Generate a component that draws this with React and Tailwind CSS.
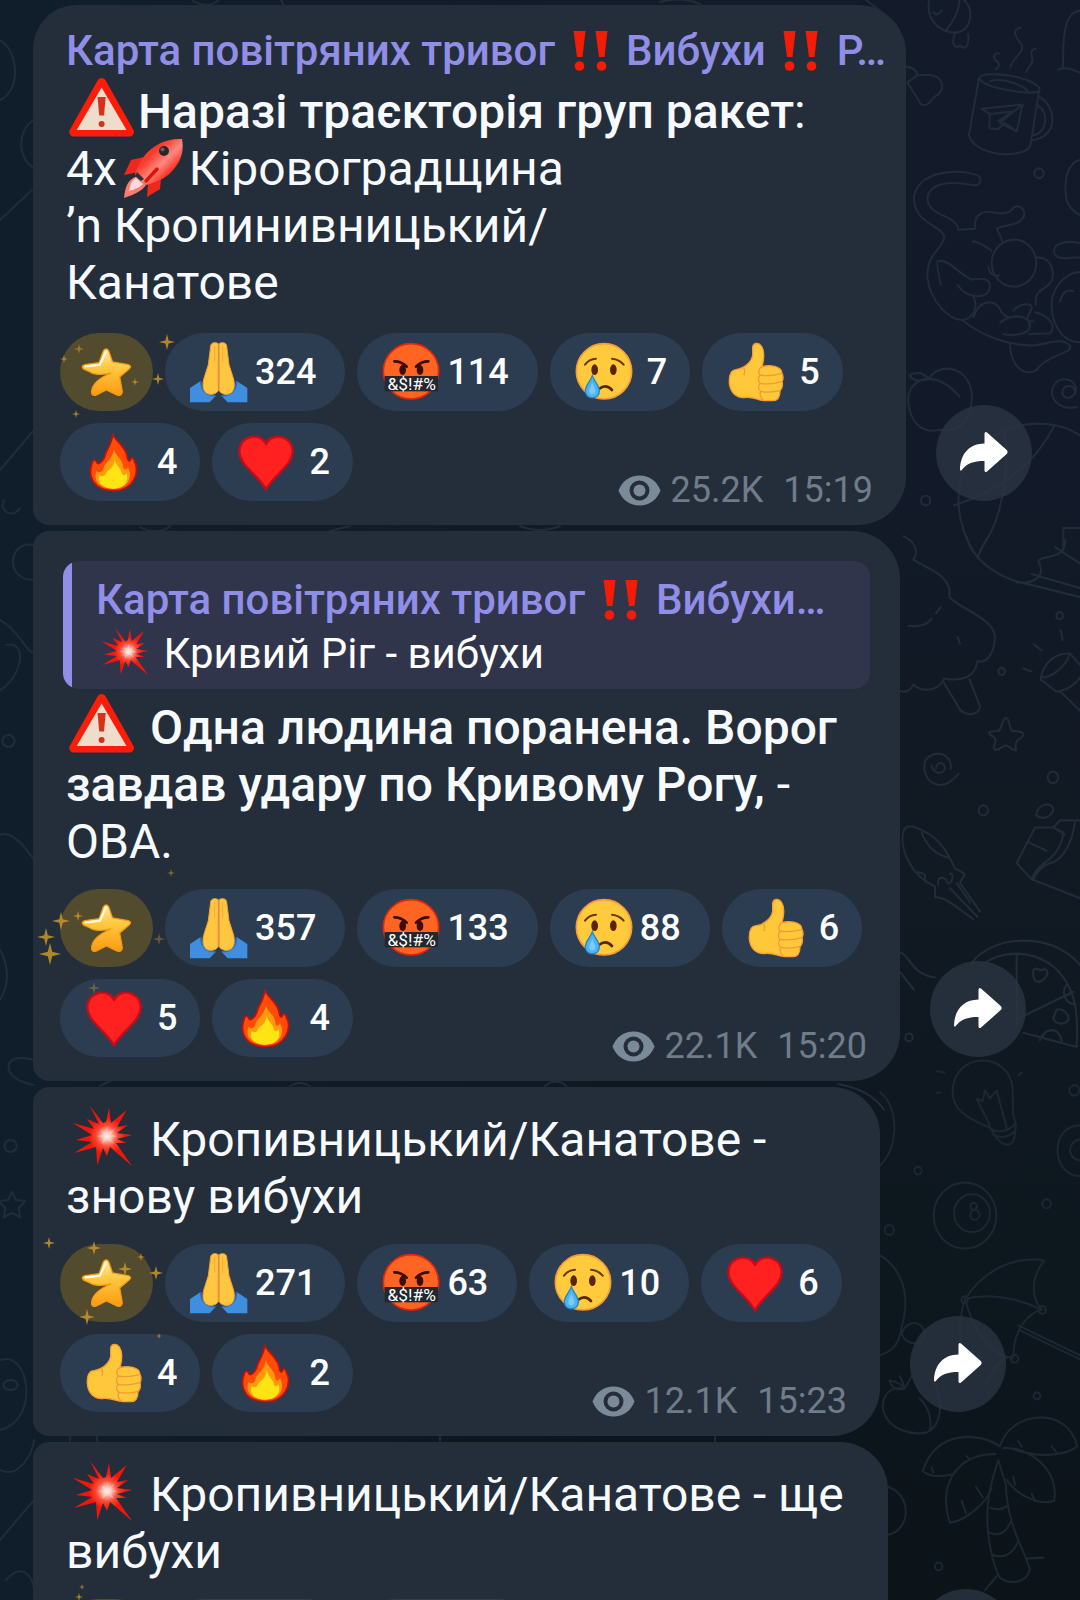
import clsx from 'clsx';

const channelTitle = 'Карта повітряних тривог';

/* Emoji that sit inside the message text */

const WarningEmoji = () => (
  <svg viewBox="0 0 72 80" role="img" aria-label="⚠️" className="-my-4 inline-block h-20 w-[72px] overflow-visible align-middle">
    <path d="M35.600 7.500 L63.500 57 H7.800 Z" fill="#fb1d08" stroke="#fb1d08" strokeWidth="9" strokeLinejoin="round" />
    <path d="M35.600 12.500 L60.500 55 H10.700 Z" fill="#efdccb" />
    <path d="M31.500 22 H39.700 L38 40.500 H33.200 Z" fill="#d8301a" />
    <circle cx="35.600" cy="49" r="3" fill="#c8371f" />
  </svg>
);

const RocketEmoji = () => (
  <svg viewBox="0 0 72 80" role="img" aria-label="🚀" className="-my-4 inline-block h-20 w-[72px] overflow-visible align-middle">
    <defs>
      <linearGradient id="rocket-body" x1="0" y1="0" x2="1" y2="1">
        <stop offset="0" stopColor="#f8281a" />
        <stop offset="0.350" stopColor="#fb3c2e" />
        <stop offset="0.550" stopColor="#ff8a80" />
        <stop offset="0.750" stopColor="#f8281a" />
        <stop offset="1" stopColor="#e81708" />
      </linearGradient>
    </defs>
    <path d="M27 25 L14 28 L7 43 L22 40 Z" fill="#f0281c" />
    <path d="M44 46 L43 57 L30 65 L31 52 Z" fill="#f0281c" />
    <path d="M20 44 C10 48 8 56 7 66 C18 62 25 59 29 53 Z" fill="#ff7b72" />
    <path d="M19 46 C13 50 14 52 12 59 C18 57 22 56 26 52 Z" fill="#ffdcd8" />
    <path d="M65 7 C50 6 36 13 28 23 C23 30 19 37 18 43 L29 53 C41 50 51 45 57 37 C65 27 67 18 65 7 Z" fill="url(#rocket-body)" />
    <path d="M20 40 L27 47 L24 49 L18 44 Z" fill="#2c3038" />
    <path d="M40 37 L29 49" stroke="#e01206" strokeWidth="3.500" strokeLinecap="round" />
    <circle cx="47" cy="19" r="5" fill="#26272c" />
    <circle cx="45.500" cy="17.500" r="2" fill="#62636a" />
  </svg>
);

const BoomEmoji = ({ small }) => (
  <svg
    viewBox="0 0 72 80"
    role="img"
    aria-label="💥"
    className={clsx('inline-block overflow-visible align-middle', small ? '-my-3 h-16 w-[57px]' : '-my-4 h-20 w-[72px]')}
  >
    <defs>
      <radialGradient id="boom-fill" gradientUnits="userSpaceOnUse" cx="41" cy="33" r="28">
        <stop offset="0" stopColor="#ffffff" />
        <stop offset="0.150" stopColor="#ffc0b6" />
        <stop offset="0.380" stopColor="#fb4a35" />
        <stop offset="0.650" stopColor="#f31509" />
      </radialGradient>
    </defs>
    <path
      d="M24 3 L37 20 L40 19 L43 5 L45 20 L60.700 7 L51 24 L62 22 L51 30 L66 32 L51 36 L61 40 L50 40 L66 63 L44 44 L41 53 L37 45 L31.300 62 L30 44 L8 50 L26 39 L10 37 L26 32 L7 20 L28 26 L21 16 L33 21 Z"
      fill="url(#boom-fill)"
    />
    <path d="M41 23 L42.500 31 L49 25 L44.500 32 L52 33 L44.500 35 L48 41 L41.500 36.500 L36 41 L38 35 L30 33 L38 31.500 L34 26 L39.500 30.500 Z" fill="#ffe0da" opacity="0.400" />
  </svg>
);

const DoubleExclamation = () => (
  <svg viewBox="0 0 50 56" role="img" aria-label="‼️" className="-my-2 inline-block h-14 w-[50px] overflow-visible align-middle">
    <g fill="#f41c05">
      <path d="M7.500 5 H19.500 L16.500 31 H11 Z" />
      <path d="M29.500 5 H41.500 L38.500 31 H33 Z" />
      <circle cx="13.500" cy="40" r="4.800" />
      <circle cx="35.500" cy="40" r="4.800" />
    </g>
  </svg>
);

/* Reaction emoji, all on a 180 grid */

const PrayEmoji = () => (
  <>
    <path d="M3 138 L35 117 L44 145 L80 162 L62 181 H3 Z" fill="#3f8ee0" />
    <path d="M175 138 L143 117 L134 145 L98 162 L116 181 H175 Z" fill="#3f8ee0" />
    <path d="M35 117 C36 142 50 160 80 162" fill="none" stroke="#2a6db8" strokeWidth="5" />
    <path d="M143 117 C142 142 128 160 98 162" fill="none" stroke="#2a6db8" strokeWidth="5" />
    <path d="M89 6 C80 -1 66 1 65 12 L58 68 L44 112 C38 138 46 156 64 157 C78 158 87 150 89 142 Z" fill="#ffc640" stroke="#f5a030" strokeWidth="3" />
    <path d="M89 6 C98 -1 112 1 113 12 L120 68 L134 112 C140 138 132 156 114 157 C100 158 91 150 89 142 Z" fill="#ffc640" stroke="#f5a030" strokeWidth="3" />
    <path d="M89 6 V144" stroke="#e98a3c" strokeWidth="5" />
    <path d="M77 12 V60 M101 12 V60" stroke="#f7ab38" strokeWidth="3" />
  </>
);

const CursingEmoji = () => (
  <>
    <circle cx="90" cy="88" r="83" fill="#ff6423" stroke="#e2260c" strokeWidth="5" />
    <path d="M40 58 Q62 58 77 74 M142 58 Q120 58 105 74" fill="none" stroke="#3a0d05" strokeWidth="8" strokeLinecap="round" />
    <ellipse cx="65" cy="84" rx="10" ry="15" fill="#3a0d05" />
    <ellipse cx="117" cy="84" rx="10" ry="15" fill="#3a0d05" />
    <rect x="11" y="102" width="160" height="46" fill="#23272e" />
    <text x="92" y="143" textAnchor="middle" fill="#fff" className="font-[Roboto,sans-serif] text-[52px] font-normal">
      &amp;$!#%
    </text>
  </>
);

const CryEmoji = () => (
  <>
    <circle cx="90" cy="88" r="83" fill="#ffcb3d" stroke="#f79a3a" strokeWidth="5" />
    <path d="M33 68 Q45 51 66 50 M114 50 Q136 52 149 68" fill="none" stroke="#6b340c" strokeWidth="6" strokeLinecap="round" />
    <ellipse cx="62" cy="83" rx="10" ry="16" fill="#5a2405" />
    <ellipse cx="118" cy="83" rx="10" ry="16" fill="#5a2405" />
    <path d="M76 140 Q96 124 114 144" fill="none" stroke="#5a2405" strokeWidth="8" strokeLinecap="round" />
    <path d="M55 101 C50 118 33 130 34 148 C36 174 74 174 76 148 C77 130 60 118 55 101 Z" fill="#4fb4f0" stroke="#1f86c8" strokeWidth="4" />
    <path d="M55 122 C50 134 45 140 46 150 C48 160 62 160 64 150 C65 140 59 134 55 122 Z" fill="#7ccbf7" />
  </>
);

const ThumbEmoji = () => (
  <>
    <path
      d="M80 18 C80 2 98 0 106 12 C118 30 114 52 108 74 C130 66 168 74 167 92 C172 102 172 112 168 118 C171 130 168 140 162 146 C162 165 155 176 140 176 H118 C95 176 85 164 60 166 C30 170 12 150 10 122 C9 95 15 84 30 83 C54 80 76 62 80 40 Z"
      fill="#ffc73a"
      stroke="#f8a033"
      strokeWidth="4"
      strokeLinejoin="round"
    />
    <path
      d="M108 74 C98 78 96 92 102 99 C96 106 96 118 102 124 C96 132 97 142 104 148 C100 158 104 170 112 174 M102 99 C126 104 150 98 166 95 M102 124 C126 128 150 124 167 119 M104 148 C126 152 146 150 161 146 M54 80 Q58 88 54 98"
      fill="none"
      stroke="#f29a35"
      strokeWidth="4"
      strokeLinecap="round"
    />
  </>
);

const FireEmoji = () => (
  <>
    <path
      d="M86 6 C88 22 128 44 130 76 C131 88 137 90 140 82 C142 74 148 78 151 87 C168 120 150 176 89 176 C26 176 10 130 25 92 C28 80 36 84 40 94 C46 98 58 86 62 74 C66 52 84 40 86 6 Z"
      fill="#ff4b08"
      stroke="#c3100c"
      strokeWidth="5"
      strokeLinejoin="round"
    />
    <path d="M90 50 C92 72 118 80 118 106 C120 118 128 112 132 106 C148 136 132 170 89 170 C44 170 26 142 38 116 C42 122 52 124 58 112 C60 90 84 88 90 50 Z" fill="#ff9a0e" />
    <path d="M92 82 C94 100 112 108 114 126 C118 132 124 130 128 124 C136 150 120 170 89 170 C54 170 38 150 48 130 C56 136 64 132 68 120 C76 112 90 108 92 82 Z" fill="#ffe414" />
  </>
);

const HeartEmoji = () => (
  <path d="M90 36 C76 2 12 6 10 58 C10 100 60 122 90 172 C120 122 170 100 170 58 C168 6 104 2 90 36 Z" fill="#ff2020" stroke="#c30d1b" strokeWidth="7" strokeLinejoin="round" />
);

const reactionEmoji = {
  '🙏': PrayEmoji,
  '🤬': CursingEmoji,
  '😢': CryEmoji,
  '👍': ThumbEmoji,
  '🔥': FireEmoji,
  '❤️': HeartEmoji,
};

const StarIcon = () => (
  <svg viewBox="0 0 160 150" aria-hidden="true" className="h-[50px] w-[52px]">
    <defs>
      <linearGradient id="star-fill" x1="0" y1="0" x2="0" y2="1">
        <stop offset="0" stopColor="#ffe9a6" />
        <stop offset="0.400" stopColor="#ffc93f" />
        <stop offset="1" stopColor="#fb9a12" />
      </linearGradient>
    </defs>
    <path
      d="M78 4 Q83 4 86 12 L97 44 L145 52 Q158 56 148 66 L119 90 L127 135 Q126 150 112 146 L78 130 L46 146 Q30 150 33 132 C36 112 50 96 92 78 C70 84 40 84 26 74 L8 66 Q-2 56 12 52 L56 46 L68 12 Q72 3 78 4 Z"
      fill="url(#star-fill)"
      stroke="#f39a14"
      strokeWidth="4"
      strokeLinejoin="round"
    />
    <path d="M14 58 L58 53 L76 14" fill="none" stroke="#fff8e4" strokeWidth="7" strokeLinecap="round" strokeLinejoin="round" />
  </svg>
);

const EyeIcon = () => (
  <svg viewBox="0 0 43 31" aria-hidden="true" className="h-[31px] w-[43px]">
    <path d="M21.500 0.500 C12 0.500 4 6 0.500 15.500 C4 25 12 30.500 21.500 30.500 C31 30.500 39 25 42.500 15.500 C39 6 31 0.500 21.500 0.500 Z" fill="#7a8a99" />
    <circle cx="21.500" cy="15.500" r="10" fill="#242e3a" />
    <circle cx="21.500" cy="15.500" r="6" fill="#7a8a99" />
  </svg>
);

const ShareIcon = () => (
  <svg viewBox="0 0 96 96" aria-hidden="true" className="size-24">
    <path
      d="M48.500 38.500 C34 38.800 24.500 48 24 64.500 Q24.400 66.500 25.800 65 C31 58.500 37 56 48.500 56 V65.500 Q48.800 68 51 66.600 L71 48.800 Q72.400 47 71 45.200 L51 27.600 Q48.800 26.200 48.500 28.800 Z"
      fill="#fff"
    />
  </svg>
);

const Sparkles = ({ points }) => (
  <svg aria-hidden="true" className="pointer-events-none absolute top-0 left-0 z-10 size-24 overflow-visible">
    {points.map(([x, y, r, opacity = 0.85]) => (
      <path
        key={`${x}-${y}`}
        d="M0 -10 L2 -2 L10 0 L2 2 L0 10 L-2 2 L-10 0 L-2 -2 Z"
        transform={`translate(${x} ${y}) scale(${r / 10})`}
        fill="#c9952c"
        opacity={opacity}
      />
    ))}
  </svg>
);

const Wallpaper = () => (
  <svg
    viewBox="0 0 1080 1600"
    preserveAspectRatio="xMaxYMin slice"
    aria-hidden="true"
    className="absolute inset-0 h-full w-full"
    fill="none"
    stroke="#212c39"
    strokeLinecap="round"
    strokeLinejoin="round"
  >
    {/* top right: fish, mug, cat in a hammock, peach */}
    <g transform="translate(900 0) scale(0.3333 0.3508)" strokeWidth="6">
      <path d="M90 -10 C75 40 100 80 150 92 C195 98 215 70 210 30 C206 10 190 -5 175 -10 M135 88 C155 70 180 30 178 -5 M165 95 C150 130 170 140 180 130 C195 145 210 130 204 96 M100 35 Q112 50 125 30" />
      <path d="M20 190 Q50 195 52 215 C90 210 125 215 127 245 C125 270 105 270 95 285 C80 305 65 305 55 285 L22 235 M22 235 L52 215" />
      <path d="M237 222 L207 385 C215 420 270 440 320 440 C360 438 390 430 392 410 L417 260 M237 222 C245 205 330 210 380 228 C430 248 430 265 390 264 C330 262 245 245 237 222 M270 232 C300 220 370 240 385 262 M415 275 C470 300 480 390 395 400 M412 300 C450 320 440 380 400 385" />
      <path d="M245 310 L368 298 L350 375 L315 350 L295 368 L268 366 L270 325 Z M270 325 L340 318 L295 345 M368 298 L300 350 L350 375" />
      <path d="M298 152 C275 150 280 170 292 175 C300 182 295 195 288 197 M362 78 C335 85 345 105 360 120 C385 145 335 165 332 190 M408 138 C380 145 405 165 395 180 L378 205" />
      <path d="M545 30 C510 30 485 60 490 190 M475 198 C500 188 520 200 545 210 M545 455 C500 460 490 520 500 570 C510 600 530 610 545 615" />
      <circle cx="417" cy="494" r="14" />
      <path d="M240 505 C245 520 235 530 220 528 C150 515 90 520 82 565 C85 620 170 610 175 655 L225 652 C220 610 250 600 275 605 C300 610 330 610 340 592 C360 580 380 600 370 620 C355 645 310 640 290 652 C300 670 305 680 308 690 M240 505 C220 485 60 470 42 560 C40 640 125 640 133 675 C130 710 80 720 82 790 C90 860 150 915 190 912 C225 905 235 870 218 842" />
      <circle cx="342" cy="750" r="67" />
      <path d="M218 688 C240 690 260 705 275 715 M122 810 C115 780 108 750 113 745 C145 735 180 785 215 797 C260 790 275 800 268 825 C255 855 200 850 173 813 M265 760 Q270 790 298 785 M408 735 C450 730 465 770 455 800 C440 830 400 820 408 870 M190 915 C250 960 330 985 400 985 C450 980 480 960 510 985 C520 1010 440 1010 410 1055 C370 1075 330 1040 330 980 M220 905 C240 850 290 850 305 890 C320 910 340 905 350 900 M300 920 C340 890 390 900 390 930 C385 960 320 955 310 952 M405 890 C450 900 470 930 450 950 L388 952" />
      <path d="M340 885 C360 865 400 860 395 880 C385 900 370 920 400 915 M545 695 C490 680 450 700 465 725 C480 745 520 730 545 735 M545 775 C490 775 450 830 455 880 C460 940 500 980 545 975 M480 860 Q490 820 520 830" />
      <path d="M85 1080 C40 1080 20 1120 25 1150 C35 1220 80 1235 120 1225 C190 1235 220 1180 215 1120 C205 1045 120 1030 85 1080 C70 1060 45 1060 28 1070 C40 1090 70 1085 85 1080 M85 1080 C130 1080 160 1110 178 1130" />
      <path d="M525 1115 C520 1090 480 1100 488 1125 C500 1145 530 1130 528 1105 C520 1075 470 1070 456 1110 C450 1145 490 1170 530 1160" />
      <path d="M315 1225 C170 1300 140 1420 215 1568 M315 1225 C325 1350 310 1480 240 1568 M315 1225 C400 1195 490 1205 545 1245 M462 1215 C400 1330 300 1400 162 1440 M490 1568 V1505 H545" />
      <circle cx="77" cy="1427" r="14" />
    </g>
    {/* middle right: cupcake, star, squid, sandwich, pizza */}
    <g transform="translate(890 540) scale(0.3333 0.3571)" strokeWidth="6">
      <path d="M40 -10 C70 0 90 30 70 55 C110 80 190 100 178 160 C220 200 320 220 315 280 C310 320 290 345 262 340 C255 390 210 395 162 388 C150 420 100 430 70 405 C60 425 40 430 25 420 M162 400 L210 475 C230 495 270 490 270 465 L238 390 M55 240 C90 245 115 235 125 220 M138 205 L152 188 M203 272 L210 290" />
      <path d="M230 -10 C250 60 330 110 420 125 L570 160 M262 50 L290 -5 M380 118 C430 125 470 100 445 60 C450 40 530 60 525 0 M425 95 L570 135 M495 20 L570 65" />
      <circle cx="509" cy="212" r="10" />
      <circle cx="335" cy="368" r="10" />
      <circle cx="489" cy="665" r="16" />
      <circle cx="280" cy="757" r="14" />
      <circle cx="57" cy="1393" r="11" />
      <path d="M452 390 C460 340 500 315 540 318 L570 350 M452 390 L500 425 C540 420 560 400 575 380 M455 385 C490 385 530 350 538 320 M512 425 L570 478 M512 252 L518 280 M432 292 L455 310 M400 360 L425 368" />
      <path d="M348 498 C360 498 358 535 368 535 C390 535 410 540 395 552 C375 562 375 575 378 587 C375 595 355 575 347 575 C335 578 320 595 312 585 C308 575 325 562 312 552 C290 540 290 535 325 535 C335 530 338 498 348 498 Z" />
      <path d="M138 640 C138 620 165 620 165 638 C160 660 130 655 125 632 M182 640 C190 600 130 580 105 620 C90 670 150 720 205 655" />
      <path d="M42 810 C60 790 90 810 120 825 C160 850 180 890 195 920 L225 935 L210 960 L270 1040 M42 810 C25 860 60 940 135 970 V1000 C170 1000 200 1030 250 1062 M180 975 L262 1055 M200 960 L240 1015 M95 820 Q120 880 180 890 M75 930 Q110 930 105 950 M145 965 C140 940 165 940 172 960 C185 970 195 930 180 935" />
      <path d="M435 805 L380 905 L425 950 L570 1003 M435 805 H490 L525 825 M412 845 L470 870 M425 950 C440 900 510 900 520 820 L490 805 L510 785 H570 M555 790 C545 860 510 900 480 905 C460 910 440 930 430 950 M438 770 C445 735 490 730 490 760 C470 785 450 780 438 770" />
      <path d="M245 1185 C300 1110 480 1090 570 1190 M275 1190 C360 1130 520 1150 555 1300 C565 1350 560 1390 560 1420 L400 1380 M380 1160 V1360 M385 1340 L550 1265 M450 1400 C470 1360 510 1365 515 1405 M530 1245 C510 1270 530 1300 555 1300 M430 1205 C440 1190 450 1215 465 1200 C485 1215 460 1235 445 1238 C430 1235 428 1220 430 1205 M500 1315 C520 1310 540 1330 535 1345 C520 1360 495 1355 490 1340 Z" />
      <path d="M30 1155 C60 1160 60 1215 135 1225 M30 1210 L72 1260" />
    </g>
    {/* bottom right: bulb, billiard ball, umbrella, plum, palm */}
    <g transform="translate(880 1050) scale(0.3333 0.3508)" strokeWidth="6" stroke="#1c2731">
      <path d="M330 222 C280 200 215 180 218 115 C225 0 390 5 398 110 C400 160 395 185 408 210 C405 245 405 270 380 270 C355 265 345 245 330 222 M330 222 C350 240 390 230 403 212 M338 240 Q370 260 405 232 M330 215 L290 140 L308 145 L315 115 L330 138 L350 115 L380 222 M170 60 L192 64 M170 122 L182 122 M425 65 L415 72" />
      <circle cx="114" cy="344" r="11" />
      <circle cx="500" cy="438" r="13" />
      <circle cx="28" cy="513" r="14" />
      <circle cx="583" cy="115" r="15" />
      <circle cx="471" cy="986" r="10" />
      <circle cx="176" cy="1472" r="11" />
      <circle cx="255" cy="472" r="94" />
      <circle cx="276" cy="465" r="54" />
      <circle cx="281" cy="446" r="10" />
      <circle cx="285" cy="470" r="14" />
      <path d="M600 215 C510 215 510 355 600 360 M600 255 C560 260 560 310 600 315" />
      <path d="M255 710 C310 630 400 585 493 600 C450 650 455 710 485 740 C450 750 400 790 400 875 C370 870 340 910 310 960 M255 710 C330 690 420 710 485 740 M255 710 C280 800 330 870 400 878 M255 710 C230 780 240 860 260 900 M415 785 L600 870 M415 797 L600 882" />
      <circle cx="254" cy="712" r="10" />
      <circle cx="487" cy="741" r="11" />
      <circle cx="404" cy="880" r="11" />
      <path d="M0 120 C55 160 60 270 0 330 M0 585 C60 620 95 690 65 790 C55 850 30 860 0 870 M65 810 C80 765 130 770 135 810 C130 845 80 845 65 810" />
      <path d="M75 965 C20 955 0 1000 12 1035 C30 1080 90 1100 140 1090 C190 1070 190 980 160 950 M75 965 C60 945 40 945 28 942 C35 965 55 970 75 965 L60 930 M75 965 L95 930 M118 992 C150 1020 155 1060 150 1085 M24 1245 C100 1270 90 1370 24 1382" />
      <path d="M355 1170 C330 1240 315 1300 325 1380 C330 1430 345 1480 360 1505 C390 1525 440 1520 450 1480 C430 1420 380 1350 378 1240 Z M330 1305 Q360 1315 380 1300 M328 1375 Q370 1395 395 1340 M340 1440 Q390 1455 415 1400 M350 1500 L315 1540 M440 1450 L490 1447" />
      <path d="M360 1130 C300 1090 170 1080 128 1200 C150 1220 190 1215 215 1210 M345 1152 C240 1150 170 1230 210 1348 C260 1340 320 1290 335 1250 M360 1130 C390 1030 560 1010 592 1130 C560 1155 480 1165 400 1138 M370 1135 C450 1130 540 1200 522 1285 C480 1300 410 1270 380 1225 M155 1190 L160 1205 M260 1158 L270 1168 M245 1285 L258 1320 M288 1245 L308 1275 M400 1215 L405 1240 M455 1265 L465 1285 M515 1130 L528 1145 M415 1115 L425 1130" />
    </g>
    {/* slivers seen past the left edge and between bubbles */}
    <g strokeWidth="2">
      <path d="M0 40 C18 50 22 90 0 100 M34 120 C16 130 18 160 34 168 M0 220 L32 190 M0 470 L34 430 M4 500 C-2 510 12 520 20 508 M34 545 C8 540 4 580 34 580 M0 620 C20 630 30 660 34 650 M0 690 C20 680 30 640 6 645 M8 735 a6 6 0 1 0 1 0 M34 860 C14 830 0 830 -4 840 M0 1000 C12 980 6 960 0 950 M34 1060 C0 1050 0 1080 34 1085 M10 1140 a6 6 0 1 0 1 0" />
      <path d="M12 1192 l4 8 l9 1 l-6 7 l1 9 l-8 -4 l-8 4 l1 -9 l-6 -7 l9 -1 Z M0 1360 C30 1350 40 1420 0 1430 M0 1470 C20 1480 34 1450 34 1440 M10 1380 a7 5 0 1 0 1 0 M0 1540 L34 1500 M6 1580 C24 1560 34 1580 34 1590" />
      <path d="M190 -2 C200 8 215 6 220 -2 M280 -2 L284 6 M660 2 Q680 -4 700 4 M866 0 L884 14 M140 527 C150 533 165 532 170 526 M330 531 L350 526 M520 526 Q540 534 560 526 M100 1086 L110 1081 M290 1086 Q300 1080 310 1086 M545 1086 C552 1080 560 1080 566 1086 M70 1437 V1441 M97 1437 V1441 M440 1437 V1441 M715 1441 V1437 M838 1084 C860 1088 875 1096 884 1110" />
    </g>
  </svg>
);

const Reaction = ({ emoji, count }) => {
  const Emoji = reactionEmoji[emoji];

  return (
    <button
      type="button"
      aria-label={count ? `${emoji} ${count}` : emoji}
      className={clsx(
        'flex h-[78px] items-center rounded-full bg-[#2d3d51] pl-6',
        count < 10 ? 'gap-[13px] pr-[23px]' : 'gap-[6px] pr-[29px]',
        !count && 'min-w-[180px]'
      )}
    >
      <svg viewBox="0 0 180 180" aria-hidden="true" className="size-[60px] shrink-0 overflow-visible">
        <Emoji />
      </svg>
      {count && <span className="text-4xl leading-[42px] font-medium text-white">{count}</span>}
    </button>
  );
};

const StarReaction = ({ sparkles }) => (
  <div className="relative">
    <button type="button" aria-label="Star" className="flex h-[78px] w-[93px] items-center justify-center rounded-full bg-[#534b2e]">
      <StarIcon />
    </button>
    <Sparkles points={sparkles} />
  </div>
);

const ChannelName = ({ children }) => (
  <div className="text-[42px] leading-[49px] font-medium whitespace-nowrap text-[#918ee8]">{children}</div>
);

const Message = ({ message, first }) => (
  <article className="flex items-end gap-[30px]">
    <div
      className={clsx(
        'w-full rounded-r-[48px] rounded-l-2xl bg-[#242e3a] px-[27px]',
        first && 'rounded-tl-[44px]',
        message.title ? 'pt-[21px]' : message.quote ? 'pt-[30px]' : 'pt-6',
        message.views ? 'pb-6' : 'pb-8',
        message.width
      )}
    >
      {message.title && <div className="mb-2 ml-[6px]">{message.title}</div>}

      {message.quote && (
        <blockquote className="mx-[3px] mb-[10px] flex overflow-hidden rounded-2xl bg-[#30354c]">
          <span className="w-[9px] shrink-0 bg-[#918ee8]" />
          <div className="min-w-0 pt-[14px] pb-[11px] pl-6">{message.quote}</div>
        </blockquote>
      )}

      <p className="mx-[6px] text-5xl leading-[57px] text-[#f7faff]">{message.text}</p>

      <div className={clsx('flex flex-wrap items-center gap-3', message.title ? 'mt-[22px]' : 'mt-[19px]')}>
        <StarReaction sparkles={message.sparkles} />
        {message.reactions.map(([emoji, count]) => (
          <Reaction key={emoji} emoji={emoji} count={count} />
        ))}
        {message.views && (
          <div className="mr-[6px] -mb-[10px] ml-auto flex items-center self-end text-4xl leading-[42px] text-[#6f7c89]">
            <EyeIcon />
            <span className="ml-[10px]">{message.views}</span>
            <time className="ml-5">{message.time}</time>
          </div>
        )}
      </div>
    </div>

    <button type="button" aria-label="Share" className="mb-6 size-24 shrink-0 rounded-full bg-[#2a3542]/80">
      <ShareIcon />
    </button>
  </article>
);

const messages = [
  {
    id: 1,
    width: 'max-w-[873px]',
    title: (
      <ChannelName>
        {channelTitle} <DoubleExclamation /> Вибухи <DoubleExclamation /> Р…
      </ChannelName>
    ),
    text: (
      <>
        <WarningEmoji />
        <b className="font-medium">Наразі траєкторія груп ракет</b>:
        <br />
        4x
        <RocketEmoji />
        Кіровоградщина
        <br />
        ’n Кропинивницький/
        <br />
        Канатове
      </>
    ),
    reactions: [['🙏', 324], ['🤬', 114], ['😢', 7], ['👍', 5], ['🔥', 4], ['❤️', 2]],
    sparkles: [[107, 9, 8], [98, 46, 6], [19, 16, 5, 0.6], [4, 26, 4], [75, 49, 4], [16, 81, 4]],
    views: '25.2K',
    time: '15:19',
  },
  {
    id: 2,
    width: 'max-w-[867px]',
    quote: (
      <>
        <ChannelName>
          {channelTitle} <DoubleExclamation /> Вибухи…
        </ChannelName>
        <div className="mt-[5px] text-[42px] leading-[49px] text-white">
          <BoomEmoji small /> Кривий Ріг - вибухи
        </div>
      </>
    ),
    text: (
      <>
        <WarningEmoji /> <b className="font-medium">Одна людина поранена. Ворог завдав удару по Кривому Рогу,</b> - ОВА.
      </>
    ),
    reactions: [['🙏', 357], ['🤬', 133], ['😢', 88], ['👍', 6], ['❤️', 5], ['🔥', 4]],
    sparkles: [[111, -16, 4, 0.6], [1, 32, 9], [18, 27, 5], [-14, 48, 9], [-10, 65, 11], [99, 50, 6, 0.4], [34, 99, 6, 0.4]],
    views: '22.1K',
    time: '15:20',
  },
  {
    id: 3,
    width: 'max-w-[847px]',
    text: (
      <>
        <BoomEmoji /> Кропивницький/Канатове - знову вибухи
      </>
    ),
    reactions: [['🙏', 271], ['🤬', 63], ['😢', 10], ['❤️', 6], ['👍', 4], ['🔥', 2]],
    sparkles: [[-11, -1, 6], [34, 4, 7], [81, 13, 4], [65, 25, 7], [96, 29, 7], [27, 73, 8], [99, 92, 3]],
    views: '12.1K',
    time: '15:23',
  },
  {
    id: 4,
    width: 'max-w-[855px]',
    text: (
      <>
        <BoomEmoji /> Кропивницький/Канатове - ще вибухи
      </>
    ),
    reactions: [['🙏'], ['😢']],
    sparkles: [[22, -12, 3], [19, -2, 4]],
  },
];

const App = () => (
  <main className="relative h-screen overflow-hidden bg-[linear-gradient(to_right,#101e2b,transparent_55%),linear-gradient(to_bottom,#131a2a,#121928_30%,#111922_55%,#0d171e_80%,#0c1319)] font-[Roboto,sans-serif]">
    <Wallpaper />
    <div className="relative flex flex-col gap-[6px] pt-[5px] pl-[33px]">
      {messages.map((message, index) => (
        <Message key={message.id} message={message} first={index === 0} />
      ))}
    </div>
  </main>
);

export default App;
